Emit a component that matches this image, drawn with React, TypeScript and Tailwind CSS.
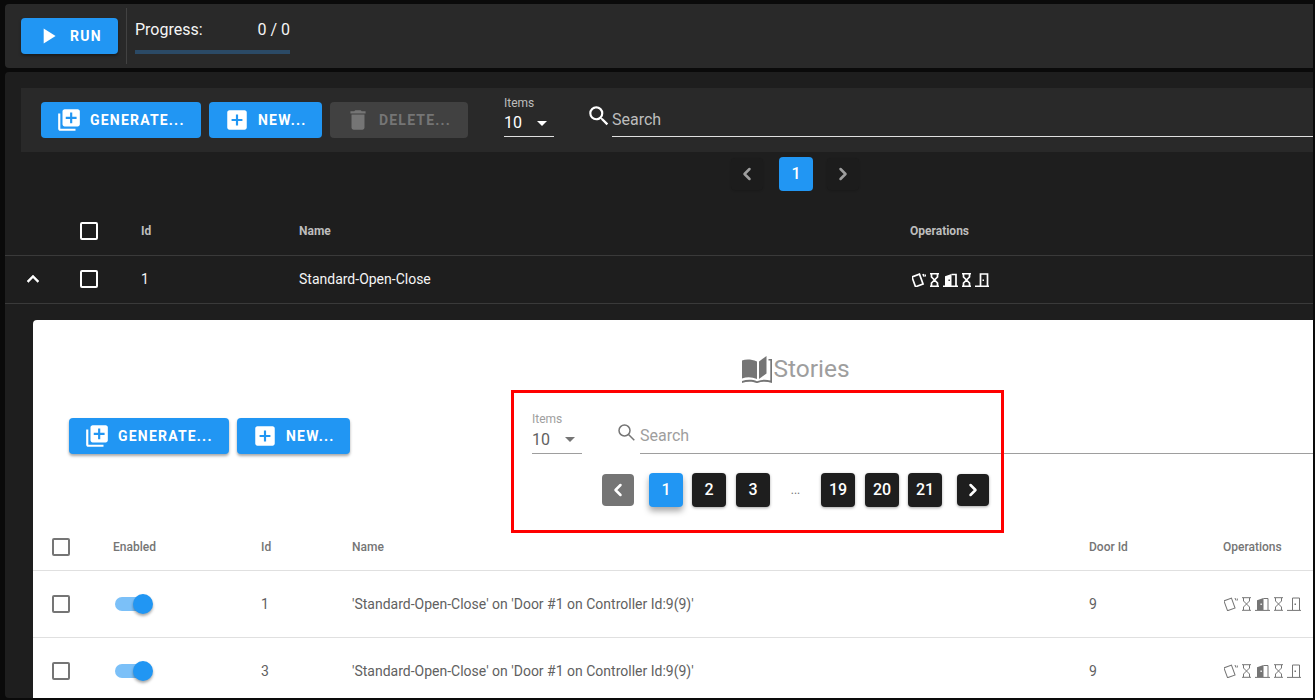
import { ChevronLeft, ChevronRight } from "lucide-react";

const font = "font-['Roboto',sans-serif]";

function LibraryAddIcon({ className }: { className?: string }) {
  return (
    <svg viewBox="0 0 24 24" className={className} fill="currentColor">
      <path d="M4 6H2v14c0 1.1.9 2 2 2h14v-2H4V6zm16-4H8c-1.1 0-2 .9-2 2v12c0 1.1.9 2 2 2h12c1.1 0 2-.9 2-2V4c0-1.1-.9-2-2-2zm-1 9h-4v4h-2v-4H9V9h4V5h2v4h4v2z" />
    </svg>
  );
}

function AddBoxIcon({ className }: { className?: string }) {
  return (
    <svg viewBox="0 0 24 24" className={className} fill="currentColor">
      <path d="M19 3H5c-1.11 0-2 .9-2 2v14c0 1.1.89 2 2 2h14c1.1 0 2-.9 2-2V5c0-1.1-.89-2-2-2zm-2 10h-4v4h-2v-4H7v-2h4V7h2v4h4v2z" />
    </svg>
  );
}

function TrashIcon({ className }: { className?: string }) {
  return (
    <svg viewBox="0 0 24 24" className={className} fill="currentColor">
      <path d="M6 19c0 1.1.9 2 2 2h8c1.1 0 2-.9 2-2V7H6v12zM19 4h-3.5l-1-1h-5l-1 1H5v2h14V4z" />
    </svg>
  );
}

function SearchFilled({ className }: { className?: string }) {
  return (
    <svg viewBox="0 0 24 24" className={className} fill="currentColor">
      <path d="M15.5 14h-.79l-.28-.27A6.471 6.471 0 0 0 16 9.5 6.5 6.5 0 1 0 9.5 16c1.61 0 3.09-.59 4.23-1.57l.27.28v.79l5 4.99L20.49 19l-4.99-5zm-6 0C7.01 14 5 11.99 5 9.5S7.01 5 9.5 5 14 7.01 14 9.5 11.99 14 9.5 14z" />
    </svg>
  );
}

function SearchThin({ className }: { className?: string }) {
  return (
    <svg viewBox="0 0 17 17" className={className} fill="none" stroke="currentColor" strokeWidth="1.500">
      <circle cx="6.500" cy="6.500" r="5.500" />
      <path d="M10.500 10.500 16.300 16.300" />
    </svg>
  );
}

function PlayIcon({ className }: { className?: string }) {
  return (
    <svg viewBox="0 0 24 24" className={className} fill="currentColor">
      <path d="M8 5v14l11-7z" />
    </svg>
  );
}

function ExpandLessIcon({ className }: { className?: string }) {
  return (
    <svg viewBox="0 0 24 24" className={className} fill="currentColor" stroke="currentColor" strokeWidth="0.500">
      <path d="M12 8l-6 6 1.41 1.41L12 10.83l4.59 4.58L18 14z" />
    </svg>
  );
}

function BookIcon({ className }: { className?: string }) {
  return (
    <svg viewBox="0 0 30 27" className={className} fill="currentColor">
      <path d="M0 4.500C4 3 9 3 15 5.500V23C10 21 5 20.800 0 22.500V4.500z" />
      <path d="M17 5.500 24.500 0v17.500L17 23V5.500z" />
      <path d="M26.500 3H30v24c-5.500-1.800-10.500-1.800-15 .2C10.500 25.200 5 25.200 0 27v-2c5-1.600 10.500-1.600 15 .3 4.500-1.900 8.800-2 13.300-.8V4.500h-1.800V3z" />
    </svg>
  );
}

// card in hand, hourglass, open door, hourglass, closed door
function OperationIcons({ weight, hole }: { weight: number; hole: string }) {
  const line = { fill: "none", stroke: "currentColor", strokeWidth: weight };
  const hourglass = (
    <svg viewBox="0 0 9 14" className="h-[14px] w-[9px]">
      <path d="M0 .7H9M0 13.300H9M1.500 1V4L4.500 7 1.500 10V13M7.500 1V4L4.500 7 7.500 10V13" {...line} />
    </svg>
  );
  return (
    <div className="flex items-center gap-1">
      <svg viewBox="0 0 14 14" className="h-[14px] w-[14px]">
        <rect x="1.500" y="2.200" width="8" height="10.500" transform="rotate(-20 5.500 7.450)" {...line} />
        <path d="M11 1 12 3.500M13.300 1.500V3.500" {...line} />
      </svg>
      {hourglass}
      <svg viewBox="0 0 15 14" className="h-[14px] w-[15px]">
        <path d="M2 13V3.200L8.500 1V13H2z" fill="currentColor" />
        <rect x="5.500" y="6.500" width="1.300" height="1.500" fill={hole} />
        <path d="M8.500 1.500H13V13M0 13.400H15" {...line} />
      </svg>
      {hourglass}
      <svg viewBox="0 0 14 14" className="h-[14px] w-[14px]">
        <path d="M5.500 13V1H12.500V13M0 13.400H14" {...line} />
        <rect x="7.500" y="6.500" width="1.500" height="1.500" fill="currentColor" />
      </svg>
    </div>
  );
}

function ContainedButton({
  icon,
  label,
  width,
  disabled,
  shadow,
}: {
  icon: React.ReactNode;
  label: string;
  width: string;
  disabled?: boolean;
  shadow?: boolean;
}) {
  return (
    <button
      className={`flex h-9 items-center gap-2 rounded pl-[15px] text-sm font-bold tracking-[1.2px] ${width} ${
        disabled ? "bg-[#414141] text-[#757575]" : "bg-[#2196f3] text-white"
      } ${shadow ? "shadow-[0_2px_3px_rgba(0,0,0,0.35)]" : ""}`}
    >
      {icon}
      <span>{label}</span>
    </button>
  );
}

function Checkbox({ dark }: { dark?: boolean }) {
  return (
    <div
      className={`size-[18px] rounded-[2px] border-2 ${dark ? "border-white" : "border-[#757575]"}`}
    />
  );
}

function Toggle() {
  return (
    <div className="relative ml-[2px] h-[14px] w-[34px] rounded-full bg-[#7bc0f8]">
      <div className="absolute top-[-3px] right-[-4px] size-5 rounded-full bg-[#2196f3] shadow-[0_2px_3px_rgba(0,0,0,0.35)]" />
    </div>
  );
}

function PageButton({ label, active, className }: { label: string; active?: boolean; className?: string }) {
  return (
    <div
      className={`flex h-[34px] w-[34px] items-center justify-center rounded text-base font-medium text-white ${
        active
          ? "bg-[#2196f3] shadow-[0_4px_6px_rgba(0,0,0,0.35)]"
          : "bg-[#1e1e1e] shadow-[0_1px_3px_rgba(0,0,0,0.35)]"
      } ${className ?? ""}`}
    >
      {label}
    </div>
  );
}

function StoryRow({ id }: { id: string }) {
  return (
    <div className="flex h-[67px] items-center border-b border-[#e0e0e0] text-sm text-[#616161]">
      <div className="w-[80px] pl-[19px]">
        <Checkbox />
      </div>
      <div className="w-[148px]">
        <Toggle />
      </div>
      <div className="w-[91px]">{id}</div>
      <div className="w-[737px]">'Standard-Open-Close' on 'Door #1 on Controller Id:9(9)'</div>
      <div className="w-[134px]">9</div>
      <div className="ml-[1px] text-[#757575]">
        <OperationIcons weight={1} hole="#ffffff" />
      </div>
    </div>
  );
}

export default function App() {
  return (
    <div className={`${font} h-[700px] w-[1315px] overflow-hidden bg-[#0a0a0a] pt-1 pr-[2px] pb-[2px] pl-[5px]`}>
      <div className="h-full overflow-hidden">
        <div className="w-[1582px]">
          {/* Run bar */}
          <div className="flex h-[64px] items-center rounded-l bg-[#292929] pl-4">
            <button className="flex h-9 w-[97px] items-center gap-[9px] rounded bg-[#2196f3] pl-[14px] text-sm font-bold tracking-[1.25px] text-white shadow-[0_2px_3px_rgba(0,0,0,0.35)]">
              <PlayIcon className="size-[26px]" />
              RUN
            </button>
            <div className="mr-2 ml-2 h-14 w-px bg-[#424242]" />
            <div className="w-[155px] self-start pt-4 text-[#f5f5f5]">
              <div className="flex justify-between text-base leading-5">
                <span>Progress:</span>
                <span>0 / 0</span>
              </div>
              <div className="mt-[10px] h-1 bg-[#2b4a66]" />
            </div>
          </div>

          {/* Main panel */}
          <div className="mt-1 h-[626px] overflow-hidden rounded-l bg-[#1e1e1e]">
            <div className="px-4 pt-4">
              <div className="flex h-[64px] items-center bg-[#292929] pl-5 text-white">
                <div className="flex gap-2">
                  <ContainedButton icon={<LibraryAddIcon className="size-[26px]" />} label="GENERATE..." width="w-40" />
                  <ContainedButton icon={<AddBoxIcon className="size-[26px]" />} label="NEW..." width="w-[113px]" />
                  <ContainedButton
                    disabled
                    icon={<TrashIcon className="size-[26px]" />}
                    label="DELETE..."
                    width="w-[138px]"
                  />
                </div>
                <div className="mb-[15px] ml-9 w-[50px] self-end">
                  <div className="text-xs leading-[14px] text-[#bdbdbd]">Items</div>
                  <div className="flex h-[27px] items-center justify-between border-b border-[#e0e0e0] text-base">
                    10
                    <span className="mr-[7px] h-0 w-0 border-x-[5px] border-t-[5px] border-x-transparent border-t-white" />
                  </div>
                </div>
                <div className="mb-[15px] ml-[32px] flex flex-1 items-end self-end">
                  <SearchFilled className="mb-[8px] size-[26px]" />
                  <div className="flex h-9 flex-1 items-end border-b border-[#e0e0e0] pb-1 text-base text-[#bdbdbd]">
                    Search
                  </div>
                </div>
              </div>
            </div>

            {/* Pager */}
            <div className="flex h-[44px] items-center justify-center pr-[2px] text-[#9e9e9e]">
              <div className="flex size-[32px] items-center justify-center rounded bg-[#1c1c1c] shadow-[0_1px_2px_rgba(0,0,0,0.15)]">
                <ChevronLeft className="size-5" strokeWidth={3} />
              </div>
              <div className="mr-[14px] ml-[16px] flex size-[34px] items-center justify-center rounded bg-[#2196f3] text-base font-medium text-white">
                1
              </div>
              <div className="flex size-[32px] items-center justify-center rounded bg-[#1c1c1c] shadow-[0_1px_2px_rgba(0,0,0,0.15)]">
                <ChevronRight className="size-5" strokeWidth={3} />
              </div>
            </div>

            {/* Header row */}
            <div className="mt-[11px] flex h-[49px] items-center border-b border-[#3a3a3a] text-xs font-bold text-[#bdbdbd]">
              <div className="w-[75px]" />
              <div className="w-[61px]">
                <Checkbox dark />
              </div>
              <div className="w-[158px]">Id</div>
              <div className="w-[611px]">Name</div>
              <div>Operations</div>
            </div>
            <div className="flex h-[48px] items-center border-b border-[#3a3a3a] pb-[2px] text-sm text-[#f5f5f5]">
              <div className="w-[75px] pl-[16px]">
                <ExpandLessIcon className="size-6 text-white" />
              </div>
              <div className="w-[61px]">
                <Checkbox dark />
              </div>
              <div className="w-[158px]">1</div>
              <div className="w-[611px]">Standard-Open-Close</div>
              <div className="mt-[2px] ml-[2px] text-white">
                <OperationIcons weight={1.7} hole="#1e1e1e" />
              </div>
            </div>

            {/* Stories card */}
            <div className="mx-7 mt-4 h-[378px] overflow-hidden rounded-tl bg-white pt-[35px]">
              <div className="flex h-7 items-center justify-center text-[24.5px] text-[#9e9e9e]">
                <BookIcon className="mr-[1px] h-[27px] w-[30px] text-[#757575]" />
                Stories
              </div>
              <div className="mt-[35px] flex h-[36px] items-center pl-9">
                <div className="flex gap-2">
                  <ContainedButton icon={<LibraryAddIcon className="size-[26px]" />} label="GENERATE..." width="w-40" shadow />
                  <ContainedButton icon={<AddBoxIcon className="size-[26px]" />} label="NEW..." width="w-[113px]" shadow />
                </div>
                <div className="ml-[182px] w-[50px] self-end">
                  <div className="text-xs leading-[14px] text-[#9e9e9e]">Items</div>
                  <div className="flex h-[28px] items-center justify-between border-b border-[#9e9e9e] text-base text-[#616161]">
                    10
                    <span className="mr-[7px] h-0 w-0 border-x-[5px] border-t-[5px] border-x-transparent border-t-[#757575]" />
                  </div>
                </div>
                <div className="ml-[36px] flex flex-1 items-end self-end">
                  <SearchThin className="mr-[5px] mb-[13px] size-[17px] text-[#757575]" />
                  <div className="flex h-9 flex-1 items-end border-b border-[#9e9e9e] pb-[5px] text-base text-[#9e9e9e]">
                    Search
                  </div>
                </div>
              </div>
              <div className="mt-[19px] flex h-[34px] items-center pl-[569px]">
                <div className="flex h-8 w-8 items-center justify-center rounded bg-[#757575] text-white">
                  <ChevronLeft className="size-5" strokeWidth={3} />
                </div>
                <PageButton label="1" active className="ml-[15px]" />
                <PageButton label="2" className="ml-[9px]" />
                <PageButton label="3" className="ml-[10px]" />
                <div className="w-[51px] text-center text-xs text-[#757575]">...</div>
                <PageButton label="19" />
                <PageButton label="20" className="ml-[10px]" />
                <PageButton label="21" className="ml-[9px]" />
                <div className="ml-[15px] flex h-8 w-8 items-center justify-center rounded bg-[#1e1e1e] text-white shadow-[0_1px_3px_rgba(0,0,0,0.35)]">
                  <ChevronRight className="size-5" strokeWidth={3} />
                </div>
              </div>

              {/* Stories table */}
              <div className="mt-[13px] flex h-[51px] items-center border-b border-[#e0e0e0] pt-1 text-xs font-medium text-[#757575]">
                <div className="w-[80px] pl-[19px]">
                  <Checkbox />
                </div>
                <div className="w-[148px]">Enabled</div>
                <div className="w-[91px]">Id</div>
                <div className="w-[737px]">Name</div>
                <div className="w-[134px]">Door Id</div>
                <div>Operations</div>
              </div>
              <StoryRow id="1" />
              <StoryRow id="3" />
            </div>
          </div>
        </div>
      </div>

      {/* Annotation drawn on top of the screenshot */}
      <div className="pointer-events-none absolute top-[390px] left-[511px] h-[143px] w-[493px] border-[3px] border-[#ff0000]" />
    </div>
  );
}
